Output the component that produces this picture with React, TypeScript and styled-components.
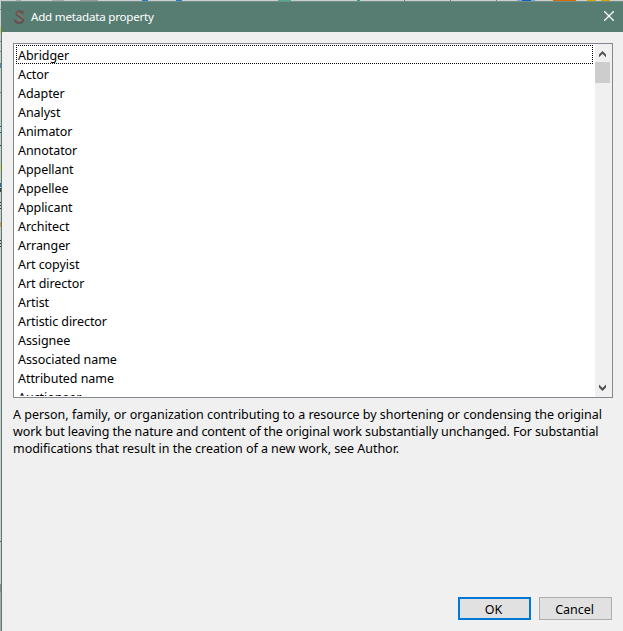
import React from "react";
import styled, { createGlobalStyle } from "styled-components";

const GlobalStyle = createGlobalStyle`
  * { box-sizing: border-box; }
  body {
    margin: 0;
    overflow: hidden;
    font-family: "Noto Sans", "Open Sans", sans-serif;
    font-size: 12.5px;
    color: #000;
  }
`;

const Desktop = styled.div`
  position: relative;
  width: 623px;
  height: 631px;
  padding: 1px 0 0 1px;
  background: #cdcdcd;
`;

const Peek = styled.i<{ $x: number; $y: number; $w: number; $h: number; $c: string }>`
  position: absolute;
  left: ${(p) => p.$x}px;
  top: ${(p) => p.$y}px;
  width: ${(p) => p.$w}px;
  height: ${(p) => p.$h}px;
  background: ${(p) => p.$c};
`;

const Dialog = styled.div`
  display: flex;
  flex-direction: column;
  height: 630px;
  background: #f0f0f0;
  border-left: 1px solid #577d73;
`;

const TitleBar = styled.header`
  display: flex;
  align-items: center;
  flex: none;
  height: 31px;
  padding: 0 9px 0 11px;
  background: #577d73;
  border-top: 1px solid #6f9087;
  color: #fff;
  svg:last-child { margin-top: -2px; }
`;

const Title = styled.h1`
  flex: 1;
  margin: 0 0 0 5px;
  font-size: 11.6px;
  font-weight: 400;
  line-height: 30px;
  letter-spacing: -0.22px;
`;

const Content = styled.main`
  display: flex;
  flex: 1;
  flex-direction: column;
  padding: 11px 11px 11px 11px;
`;

const ListBox = styled.div`
  display: flex;
  height: 355px;
  width: 600px;
  background: #fff;
  border: 1px solid #828790;
`;

const Items = styled.ul`
  flex: 1;
  margin: 0;
  padding: 1px 2px 0;
  height: 352px;
  overflow: hidden;
  list-style: none;
`;

const Item = styled.li<{ $focused?: boolean }>`
  height: 19px;
  padding: 0 1px;
  border: 1px ${(p) => (p.$focused ? "dotted #000" : "solid transparent")};
  line-height: 19px;
  letter-spacing: -0.06px;
  white-space: nowrap;
`;

const ScrollBar = styled.div`
  display: flex;
  flex-direction: column;
  width: 17px;
  padding: 1px 2px 1px 0;
  background: #f0f0f0;
  svg { display: block; flex: none; }
`;

const Thumb = styled.div`
  height: 21px;
  background: #cdcdcd;
  margin-bottom: auto;
`;

const Description = styled.p`
  margin: 8px 0 0;
  line-height: 17px;
  white-space: nowrap;
`;

const Line = styled.span<{ $spacing: number }>`
  display: block;
  letter-spacing: ${(p) => p.$spacing}px;
`;

const Buttons = styled.footer`
  display: flex;
  justify-content: flex-end;
  gap: 8px;
  margin-top: auto;
`;

const Button = styled.button<{ $primary?: boolean }>`
  width: 73px;
  height: 23px;
  padding: 2px 2px 0 0;
  background: #e1e1e1;
  border: ${(p) => (p.$primary ? "2px solid #0078d7" : "1px solid #adadad")};
  font: inherit;
  line-height: 17px;
  letter-spacing: -0.05px;
  color: #000;
`;

const roles = [
  "Abridger", "Actor", "Adapter", "Analyst", "Animator", "Annotator", "Appellant",
  "Appellee", "Applicant", "Architect", "Arranger", "Art copyist", "Art director",
  "Artist", "Artistic director", "Assignee", "Associated name", "Attributed name",
  "Auctioneer",
];

const description = [
  { text: "A person, family, or organization contributing to a resource by shortening or condensing the original", spacing: -0.01 },
  { text: "work but leaving the nature and content of the original work substantially unchanged. For substantial", spacing: -0.1 },
  { text: "modifications that result in the creation of a new work, see Author.", spacing: -0.04 },
];

const behind: [number, number, number, number, string][] = [
  [16, 0, 5, 1, "#aaa"], [52, 0, 12, 1, "#aaa"], [80, 0, 18, 1, "#999"],
  [142, 0, 6, 1, "#2878bd"], [176, 0, 6, 1, "#2878bd"], [278, 0, 13, 1, "#4daa95"],
  [357, 0, 3, 1, "#269e80"], [404, 0, 1, 1, "#777"], [450, 0, 1, 1, "#777"],
  [496, 0, 1, 1, "#777"], [517, 0, 18, 1, "#77a6d7"], [522, 0, 9, 1, "#185abd"],
  [553, 0, 23, 1, "#d86b00"], [587, 0, 9, 1, "#d9a600"], [601, 0, 9, 1, "#d9a600"],
  [0, 9, 1, 1, "#888"], [0, 27, 1, 6, "#d4c85c"], [0, 41, 1, 1, "#888"],
  [0, 51, 1, 1, "#888"], [0, 63, 1, 5, "#6681a8"], [0, 92, 1, 1, "#777"],
  [0, 126, 1, 1, "#145eab"], [0, 132, 1, 1, "#145eab"], [0, 145, 1, 1, "#234363"],
  [0, 164, 1, 7, "#dfd15f"], [0, 183, 1, 4, "#1c6fba"], [0, 188, 1, 4, "#4a4440"],
  [0, 202, 1, 1, "#333"], [0, 205, 1, 1, "#333"], [0, 208, 1, 1, "#333"],
  [0, 222, 1, 5, "#df9d42"], [0, 240, 1, 1, "#333"], [0, 243, 1, 1, "#333"],
  [0, 246, 1, 1, "#333"], [0, 541, 1, 1, "#666"], [0, 584, 1, 8, "#8c8c8c"],
  [0, 592, 1, 39, "#aaa"],
];

function AppIcon() {
  return (
    <svg width="13" height="16" viewBox="0 0 13 16" fill="none">
      <path d="M9.6 5C9.2 1.4 3.7 1.4 3.6 4.6c0 3.2 6.8 3 6.4 6.5-.3 3.4-6.6 3.8-8-.2" stroke="#4b5552" strokeWidth="2.2" />
      <path d="M9.2 4.6C8.3 1.5 3.9 1.8 3.8 4.4c0 2.9 6.2 3.2 5.9 6.4-.3 2.8-5.6 3.2-7 .7" stroke="#8b4f4b" strokeWidth="1.2" />
      <path d="M10.6 1.2v3.9M1.4 9.8v3.8" stroke="#7b5a55" strokeWidth="1" />
      <path d="M4.2 3.4c.4 2.8 5.4 3.4 6.3 6M4.8 12.4c-.2-1.8 2.4-2 2.6-.4" stroke="#8a8581" strokeWidth=".8" />
    </svg>
  );
}

function Chevron({ down = false }: { down?: boolean }) {
  return (
    <svg width="15" height="17" viewBox="0 0 15 17">
      <path
        d={down ? "M4 5.6v2.8l3.5 3.5L11 8.4V5.6L7.5 9.1Z" : "M4 12.2V9.4l3.5-3.5L11 9.4v2.8L7.5 8.7Z"}
        fill="#505050"
      />
    </svg>
  );
}

export default function App() {
  return (
    <Desktop>
      <GlobalStyle />
      {behind.map(([x, y, w, h, c], i) => (
        <Peek key={i} $x={x} $y={y} $w={w} $h={h} $c={c} />
      ))}
      <Dialog>
        <TitleBar>
          <AppIcon />
          <Title>Add metadata property</Title>
          <svg width="10" height="10" viewBox="0 0 10 10">
            <path d="M0 0 10 10M10 0 0 10" stroke="#fff" strokeWidth="1.25" />
          </svg>
        </TitleBar>
        <Content>
          <ListBox>
            <Items>
              {roles.map((role, i) => (
                <Item key={role} $focused={i === 0}>{role}</Item>
              ))}
            </Items>
            <ScrollBar>
              <Chevron />
              <Thumb />
              <Chevron down />
            </ScrollBar>
          </ListBox>
          <Description>
            {description.map((line) => (
              <Line key={line.text} $spacing={line.spacing}>{line.text}</Line>
            ))}
          </Description>
          <Buttons>
            <Button $primary>OK</Button>
            <Button>Cancel</Button>
          </Buttons>
        </Content>
      </Dialog>
    </Desktop>
  );
}
